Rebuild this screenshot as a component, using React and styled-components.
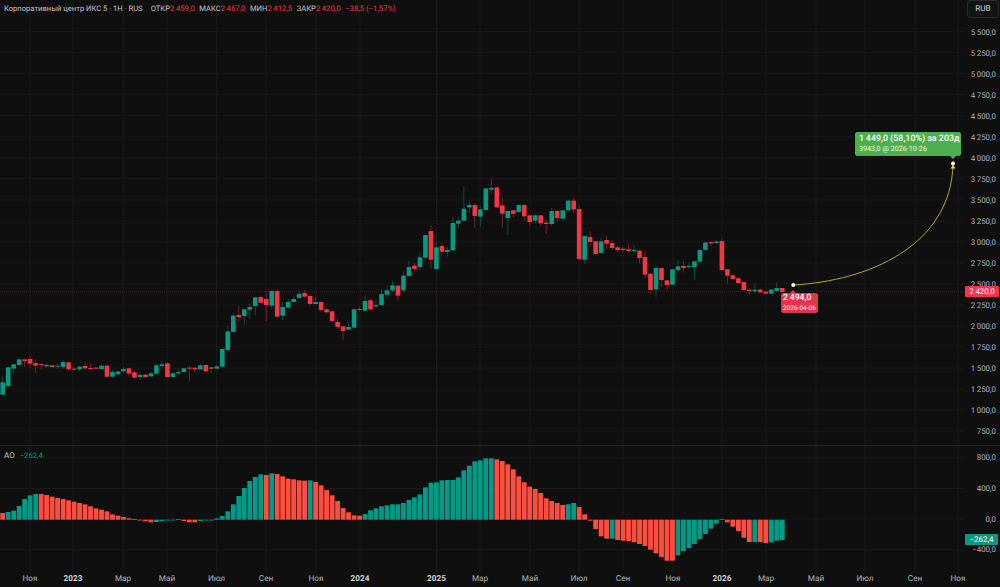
import React from 'react';
import styled, { createGlobalStyle } from 'styled-components';

const GlobalStyle = createGlobalStyle`
  html, body { margin: 0; padding: 0; background: #0f0f0f; }
  body { font-family: Roboto, "Liberation Sans", sans-serif; text-rendering: geometricPrecision; }
`;

const UP = '#089981';
const DOWN = '#f23645';
const AO_UP = '#009a87';
const AO_DOWN = '#ff4d3f';
const GRID = '#1a1a1a';
const AXIS = '#b2b5be';

// candles as read off the chart: colour, body top, body bottom, wick top, wick bottom (y at 3x)
const candleRows = [
  [280, `g 307 344 290 344|g 262 318 260 323|g 253 266 253 279|g 238 255 235 255|r 238 243 238 261|r 237 251 229 264|r 249 257 238 278|r 252 255 250 268|g 255 259 249 262|r 256 261 256 263|g 257 259 251 267|g 246 261 240 266|r 247 268 247 272|r 266 268 261 271|g 260 268 258 273|r 258 265 249 270|r 264 267 250 268|r 263 266 262 267|g 257 267 253 268|r 257 290 255 294|g 276 290 270 294|g 274 283 272 285|g 267 274 261 276|r 265 281 263 290|r 277 293 272 295|g 285 291 280 296|r 284 291 283 293|g 280 289 275 291|g 256 281 250 282|g 253 258 244 261|r 250 291 248 292|g 280 291 275 292|g 276 280 268 285|g 265 276 263 277|r 263 266 258 304|r 263 268 263 278|g 256 268 252 270|r 255 274 254 276|r 262 266 262 279|g 259 266 254 267|g 207 260 207 262|g 154 210 136 210|g 107 156 100 156`],
  [170, `r 435 441 408 456|g 418 438 415 465|g 411 419 400 447|g 382 408 380 437|r 381 398 376 400|r 387 405 368 453|g 363 407 360 417|r 363 440 358 443|g 411 437 398 450|g 396 413 388 413|g 387 396 380 396|g 372 384 363 385|r 369 380 360 381|r 378 402 377 407|g 396 402 382 402|r 396 420 395 427|r 418 427 412 431|r 424 453 422 454|r 456 471 447 476|r 469 483 468 510|g 471 479 457 480|g 418 473 416 473|r 417 420 410 424|g 393 422 376 423|r 391 418 385 421|g 405 409 387 414|g 372 405 358 405|g 361 374 347 385|g 346 361 333 366|r 347 377 347 392|g 317 361 306 367|g 291 318 273 318|r 287 297 279 304|g 262 291 246 300|g 195 263 195 266|r 183 269 165 296|g 232 297 217 298|r 228 245 218 254|g 240 246 232 260|g 159 241 142 243|g 152 161 141 174`],
  [170, `g 116 152 48 152|g 105 112 94 128|r 105 138 100 174|g 118 140 108 170|g 55 120 55 120|g 54 59 25 72|r 52 112 52 114|r 106 131 82 173|g 123 144 120 195|r 121 131 120 143|g 105 126 103 127|r 105 139 103 152|r 136 156 135 168|g 136 152 132 161|r 136 160 135 167|r 158 162 148 192|g 123 162 114 168|r 123 144 121 155|g 121 146 119 148|g 92 121 90 122|r 92 118 85 128|r 117 267 105 272|g 198 269 198 281|r 201 216 183 228|r 214 252 213 255|g 214 249 205 249|r 210 221 198 237|r 219 234 209 240|r 232 240 225 246`],
  [220, `r 86 90 80 97|r 88 93 73 94|g 90 93 76 100|r 92 114 90 130|r 111 164 95 173|r 161 210 160 220|g 144 208 138 232|r 144 180 143 201|r 181 195 180 210|g 148 194 147 194|g 139 150 121 158|r 138 144 125 158|g 138 141 128 148|g 124 141 122 181|g 90 125 85 126|g 68 90 64 90|r 66 70 66 80|g 65 69 60 70|r 63 150 55 151|r 148 167 147 192|r 166 177 160 178|r 175 189 170 192|r 186 210 185 213|r 209 213 205 225|g 209 213 190 218|r 209 217 205 219|r 215 221 214 222|g 209 221 207 223|g 204 213 187 214|r 204 216 204 216`],
];

const candles = candleRows.flatMap(([base, rows]) =>
  rows.split('|').map((row) => {
    const [color, ...vals] = row.split(' ');
    const [top, bottom, high, low] = vals.map((v) => base + Number(v) / 3);
    return { color, top, bottom, high, low };
  })
);

const aoRows = `r204 g201 g197 g183 g162 g151 g147 r147 r150 r155 r159 r162 r166 r170 r174 r178 r184 r190 r194 r199 r208 r212 r216 r220 r222 r226 r229 r232 g231 g228 g225 g225 g222 r228 r232 r232 g228 g226 g225 g220 g213 g199 g178 g153 g129 g108 g96 g88 r90 g85 r87 r94 r101 r103 r106 r107 g106 r111 r121 r135 r151 r168 r189 r202 r211 r212 g207 g196 g190 g184 g181 g178 g178 g174 g165 g157 g148 g127 g113 g112 g106 g105 g105 g97 g76 g62 g49 g46 g40 g40 r43 r48 r58 r73 r94 r112 r125 r132 r144 r160 r168 r174 r180 g178 g174 r186 r208 r227 r252 r274 r281 g281 r285 r287 r288 r292 r297 r303 r314 r325 r336 r347 r347 g331 g318 g309 g297 g282 g267 g251 g236 g222 r232 r245 r258 r278 r291 g291 r291 r294 g292 g287 g285`;

const aoBars = aoRows.split(' ').map((s) => ({ color: s[0], top: 445 + Number(s.slice(1)) / 3 }));

const barX = (i) => 2.7 + 5.49 * i;
const AO_ZERO = 519.7;

// thin space between thousands, like the chart prints them
const priceTicks = ['5\u2009500,0','5\u2009250,0','5\u2009000,0','4\u2009750,0','4\u2009500,0','4\u2009250,0','4\u2009000,0','3\u2009750,0','3\u2009500,0','3\u2009250,0','3\u2009000,0','2\u2009750,0','2\u2009500,0','2\u2009250,0','2\u2009000,0','1\u2009750,0','1\u2009500,0','1\u2009250,0','1\u2009000,0','750,0'];
const priceY = (i) => 31.6 + 21.03 * i;
const aoTicks = ['800,0', '400,0', '0,0', '−400,0'];
const aoY = (i) => 12.9 + 30.6 * i;

const timeTicks = [
  ['Ноя', 30], ['2023', 73, true], ['Мар', 123], ['Май', 167], ['Июл', 216.5], ['Сен', 266], ['Ноя', 316],
  ['2024', 360, true], ['2025', 436.5, true], ['Мар', 480], ['Май', 530], ['Июл', 579], ['Сен', 623], ['Ноя', 673],
  ['2026', 722, true], ['Мар', 766], ['Май', 816], ['Июл', 865], ['Сен', 915], ['Ноя', 958],
];

const Page = styled.div`
  width: 1000px;
  height: 587px;
  background: #0f0f0f;
  display: flex;
  flex-direction: column;
  overflow: hidden;
`;

const Pane = styled.section`
  position: relative;
  box-sizing: border-box;
  display: flex;
  height: ${(p) => p.$height}px;
  flex: none;
  overflow: hidden;
  border-top: ${(p) => (p.$divided ? '1px solid #232323' : 'none')};
`;

const Plot = styled.svg`
  display: block;
  flex: none;
  width: 965px;
  height: 100%;
`;

const PriceAxis = styled.div`
  flex: 1;
  display: flex;
  flex-direction: column;
  padding-top: ${(p) => p.$offset}px;
  margin-top: ${(p) => p.$shift || 0}px;
`;

const AxisLabel = styled.div`
  flex: none;
  height: ${(p) => p.$step}px;
  line-height: ${(p) => p.$step}px;
  padding-right: 4px;
  text-align: right;
  font-size: 7.9px;
  color: ${AXIS};
  white-space: nowrap;
`;

const Legend = styled.div`
  position: absolute;
  left: 4px;
  top: 3px;
  display: flex;
  align-items: center;
  height: 11px;
  font-size: 7.6px;
  color: #c4c6cc;
  white-space: nowrap;
`;

const LegendTitle = styled.span`
  width: 146.7px;
  flex: none;
`;

const Ohlc = styled.span`
  margin-right: 4.6px;
`;

const LegendValue = styled.span`
  color: ${(p) => p.$color};
  font-size: 7.7px;
  margin-left: ${(p) => p.$gap || 0}px;
`;

const CurrencyButton = styled.div`
  position: absolute;
  right: 1px;
  top: 0;
  width: 32px;
  height: 18px;
  box-sizing: border-box;
  border: 1px solid #2a2a2a;
  border-radius: 3px;
  background: #131313;
  color: #d6d6d6;
  font-size: 8.2px;
  line-height: 16px;
  text-align: center;
`;

const PriceTag = styled.div`
  position: absolute;
  right: ${(p) => p.$right}px;
  top: ${(p) => p.$top}px;
  width: ${(p) => p.$width}px;
  height: 11px;
  line-height: 11px;
  border-radius: 1px;
  background: ${(p) => p.$bg};
  color: #fff;
  font-size: 7.9px;
  text-align: center;
`;

const Callout = styled.div`
  position: absolute;
  left: ${(p) => p.$left}px;
  top: ${(p) => p.$top}px;
  box-sizing: border-box;
  width: ${(p) => p.$width}px;
  height: ${(p) => p.$h}px;
  padding: 0 ${(p) => p.$pad}px;
  display: flex;
  flex-direction: column;
  justify-content: center;
  border-radius: 2px;
  background: ${(p) => p.$bg};
  box-shadow: 0 0 0 1px #000;
  color: #fff;
  white-space: nowrap;
  &::after {
    content: '';
    position: absolute;
    left: ${(p) => p.$arrow}px;
    ${(p) => (p.$arrowUp ? 'top: -3px;' : 'bottom: -3px;')}
    border-left: 3px solid transparent;
    border-right: 3px solid transparent;
    ${(p) => (p.$arrowUp ? 'border-bottom' : 'border-top')}: 3px solid ${(p) => p.$bg};
  }
`;

const CalloutMain = styled.div`
  font-size: ${(p) => p.$size}px;
  font-weight: 500;
  line-height: 10px;
`;

const CalloutSub = styled.div`
  font-size: ${(p) => p.$size}px;
  line-height: 10px;
  opacity: 0.92;
`;

const IndicatorLegend = styled.div`
  position: absolute;
  left: 4px;
  top: 4px;
  font-size: 8px;
  line-height: 11px;
  color: #c4c6cc;
`;

const TimeAxis = styled.div`
  flex: none;
  height: 15px;
  display: flex;
  padding-left: 30px;
  line-height: 15px;
  font-size: 8.2px;
  color: ${AXIS};
`;

const TimeCell = styled.div`
  flex: none;
  width: ${(p) => p.$width}px;
`;

const TimeText = styled.span`
  display: block;
  width: fit-content;
  transform: translateX(-50%);
  font-weight: ${(p) => (p.$year ? 700 : 400)};
  color: ${(p) => (p.$year ? '#d1d4dc' : AXIS)};
`;

function VerticalGrid({ height }) {
  return timeTicks.map(([, x], i) => (
    <line key={i} x1={x} x2={x} y1={0} y2={height} stroke={GRID} strokeWidth="1" />
  ));
}

function MainChart() {
  return (
    <Plot viewBox="0 0 965 445">
      <VerticalGrid height={445} />
      {priceTicks.map((_, i) => (
        <line key={i} x1={0} x2={965} y1={priceY(i)} y2={priceY(i)} stroke={GRID} strokeWidth="1" />
      ))}
      <line x1={0} x2={965} y1={291.7} y2={291.7} stroke="#f23645" strokeOpacity="0.3" strokeWidth="1" strokeDasharray="1 1" />
      {candles.map((c, i) => {
        const fill = c.color === 'g' ? UP : DOWN;
        const x = barX(i);
        return (
          <g key={i} fill={fill}>
            <rect x={x - 0.4} y={c.high} width={0.8} height={c.low - c.high} opacity="0.55" />
            <rect x={x - 2.3} y={c.top} width={4.6} height={Math.max(c.bottom - c.top, 1)} />
          </g>
        );
      })}
      <path d="M793 285 C868 281 951 246 953 164" fill="none" stroke="#b8a82a" strokeWidth="1" />
      <path d="M950.5 168.5 L953 165 L955.5 168.5 Z" fill="#f4dc3c" />
      <circle cx="953" cy="163.5" r="2" fill="#fff" />
      <circle cx="793.3" cy="285" r="2" fill="#fff" />
    </Plot>
  );
}

function AoChart() {
  return (
    <Plot viewBox="0 1 965 126">
      <VerticalGrid height={127} />
      {aoTicks.map((_, i) => (
        <line key={i} x1={0} x2={965} y1={aoY(i)} y2={aoY(i)} stroke={GRID} strokeWidth="1" />
      ))}
      {aoBars.map((b, i) => {
        const zero = AO_ZERO - 445;
        const top = b.top - 445;
        return (
          <rect
            key={i}
            x={barX(i) - 2.4}
            y={Math.min(top, zero)}
            width={4.8}
            height={Math.max(Math.abs(top - zero), 0.8)}
            fill={b.color === 'g' ? AO_UP : AO_DOWN}
          />
        );
      })}
    </Plot>
  );
}

export default function App() {
  return (
    <Page>
      <GlobalStyle />
      <Pane $height={445}>
        <MainChart />
        <PriceAxis $offset={21.6}>
          {priceTicks.map((label) => (
            <AxisLabel key={label} $step={21.03}>{label}</AxisLabel>
          ))}
        </PriceAxis>
        <Legend>
          <LegendTitle>Корпоративный центр ИКС 5 · 1Н · RUS</LegendTitle>
          <Ohlc>ОТКР<LegendValue $color={DOWN}>2{'\u2009'}459,0</LegendValue></Ohlc>
          <Ohlc>МАКС<LegendValue $color={DOWN}>2{'\u2009'}467,0</LegendValue></Ohlc>
          <Ohlc>МИН<LegendValue $color={DOWN}>2{'\u2009'}412,5</LegendValue></Ohlc>
          <Ohlc>ЗАКР<LegendValue $color={DOWN}>2{'\u2009'}420,0</LegendValue></Ohlc>
          <LegendValue $color={DOWN}>−38,5 (−1,57%)</LegendValue>
        </Legend>
        <CurrencyButton>RUB</CurrencyButton>
        <PriceTag $top={286} $right={1} $width={34} $bg="#f5344a">2{'\u2009'}420,0</PriceTag>
        <Callout $left={855} $top={132} $width={106} $h={24} $pad={4} $bg="#4caf50" $arrow={95}>
          <CalloutMain $size={8.9}>1{'\u2009'}449,0 (58,10%) за 203д</CalloutMain>
          <CalloutSub $size={7.2}>3943,0 @ 2026-10-26</CalloutSub>
        </Callout>
        <Callout $left={781} $top={293} $width={37} $h={20} $pad={2} $bg="#e0354a" $arrow={9} $arrowUp>
          <CalloutMain $size={8.7}>2{'\u2009'}494,0</CalloutMain>
          <CalloutSub $size={6.5}>2026-04-06</CalloutSub>
        </Callout>
      </Pane>
      <Pane $height={127} $divided>
        <AoChart />
        <PriceAxis $offset={0} $shift={-2.7}>
          {aoTicks.map((label) => (
            <AxisLabel key={label} $step={30.6}>{label}</AxisLabel>
          ))}
        </PriceAxis>
        <IndicatorLegend>AO <LegendValue $color={UP} $gap={3}>−262,4</LegendValue></IndicatorLegend>
        <PriceTag $top={88.3} $right={2} $width={33} $bg={UP}>−262,4</PriceTag>
      </Pane>
      <TimeAxis>
        {timeTicks.map(([label, x, year], i) => (
          <TimeCell key={i} $width={i < timeTicks.length - 1 ? timeTicks[i + 1][1] - x : 10}>
            <TimeText $year={year}>{label}</TimeText>
          </TimeCell>
        ))}
      </TimeAxis>
    </Page>
  );
}
